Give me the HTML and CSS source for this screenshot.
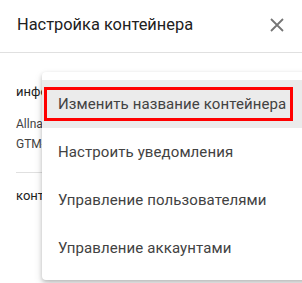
FILE: index.html
```html
<!DOCTYPE html>
<html lang="ru">
<head>
    <meta charset="UTF-8">
    <title>Настройка контейнера</title>
    <link rel="stylesheet" href="styles.css">
</head>
<body>
    <div class="dialog">
        <div class="dialog-header">
            <h1 class="dialog-title">Настройка контейнера</h1>
            <button class="close-button" aria-label="Закрыть">
                <svg width="14" height="14" viewBox="0 0 14 14">
                    <path d="M1 1 L13 13 M13 1 L1 13" stroke="#757575" stroke-width="1.8" fill="none"/>
                </svg>
            </button>
        </div>
        <div class="dialog-body">
            <div class="section">
                <div class="section-label">информация</div>
                <div class="section-text">Allnatural</div>
                <div class="section-text">GTM-XXXXXX</div>
            </div>
            <div class="section">
                <div class="section-label">контейнер</div>
            </div>
        </div>

        <div class="menu">
            <div class="menu-item selected"><span class="outline">Изменить название контейнера</span></div>
            <div class="menu-item">Настроить уведомления</div>
            <div class="menu-item">Управление пользователями</div>
            <div class="menu-item">Управление аккаунтами</div>
        </div>
    </div>
</body>
</html>
```

FILE: styles.css
```css
body {
    margin: 0;
    font-family: Roboto, "Liberation Sans", sans-serif;
    background-color: #fff;
    color: #212121;
}

.dialog {
    position: relative;
    width: 302px;
    height: 283px;
    overflow: hidden;
}

.dialog-header {
    display: flex;
    align-items: center;
    justify-content: space-between;
    height: 53px;
    padding: 0 16px 0 17px;
    border-bottom: 1px solid #e0e0e0;
    box-sizing: border-box;
}

.dialog-title {
    margin: 0;
    font-size: 16.4px;
    font-weight: 400;
    color: #212121;
    padding-bottom: 3px;
}

.close-button {
    border: none;
    background: none;
    padding: 0;
    width: 14px;
    height: 14px;
    margin-right: 2px;
    margin-bottom: 3px;
    cursor: pointer;
}

.dialog-body {
    padding: 0 16px;
}

.section {
    padding-top: 31px;
    padding-bottom: 18px;
    border-bottom: 1px solid #e0e0e0;
    font-size: 12px;
}

.section + .section {
    border-bottom: none;
    padding-top: 15px;
}

.section-label {
    font-size: 13px;
    color: #212121;
    margin-bottom: 15px;
}

.section-text {
    color: #424242;
    line-height: 20px;
}

.menu {
    position: absolute;
    left: 42px;
    top: 72px;
    width: 272px;
    padding: 8px 0;
    background-color: #fff;
    border-radius: 4px;
    box-shadow: 0 2px 4px rgba(0, 0, 0, 0.2), 0 4px 10px rgba(0, 0, 0, 0.12);
}

.menu-item {
    height: 48px;
    display: flex;
    align-items: center;
    padding-left: 16px;
    font-size: 15px;
    letter-spacing: 0.1px;
    color: #424242;
}

.menu-item.selected {
    background-color: #ebebeb;
    padding-left: 2px;
}

.outline {
    display: flex;
    align-items: center;
    height: 28px;
    width: 232px;
    padding-left: 11px;
    border: 3px solid #f00;
}
```
